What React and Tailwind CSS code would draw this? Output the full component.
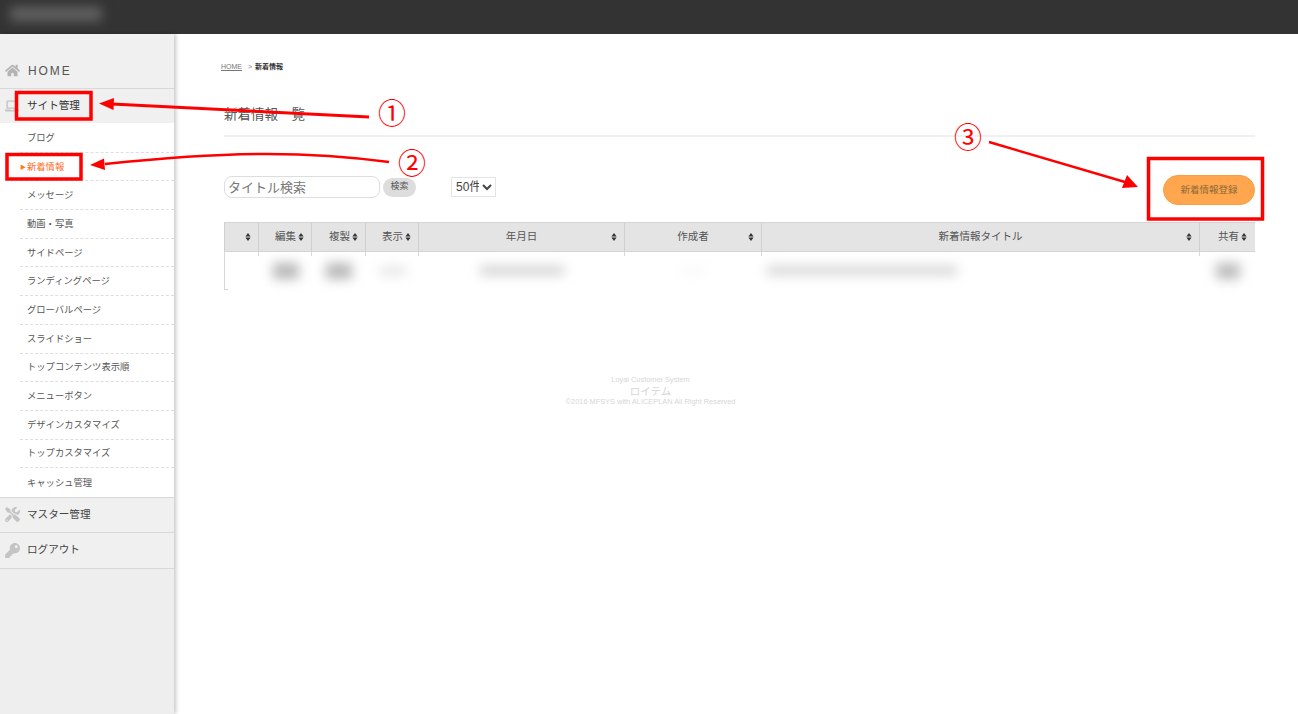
import React from 'react';
import { FaHome, FaLaptop, FaTools, FaKey } from 'react-icons/fa';

const SUB_MENU = ['ブログ', '新着情報', 'メッセージ', '動画・写真', 'サイドページ', 'ランディングページ', 'グローバルページ', 'スライドショー', 'トップコンテンツ表示順', 'メニューボタン', 'デザインカスタマイズ', 'トップカスタマイズ', 'キャッシュ管理'];

const COLUMNS = [
  { label: '', width: 'w-[34px]', center: false },
  { label: '編集', width: 'w-[53px]', center: false, blur: 'w-[26px] h-[16px] bg-[#b8b8b8]' },
  { label: '複製', width: 'w-[54px]', center: false, blur: 'w-[26px] h-[16px] bg-[#b8b8b8]' },
  { label: '表示', width: 'w-[53px]', center: false, blur: 'w-[26px] h-[8px] bg-[#e2e2e2]' },
  { label: '年月日', width: 'w-[206px]', center: true, blur: 'w-[84px] h-[9px] bg-[#d0d0d0]' },
  { label: '作成者', width: 'w-[137px]', center: true, blur: 'w-[24px] h-[3px] bg-[#efefef]' },
  { label: '新着情報タイトル', width: 'w-[438px]', center: true, left: true, blur: 'w-[190px] h-[9px] bg-[#d4d4d4]' },
  { label: '共有', width: 'w-[55px]', center: false, blur: 'w-[24px] h-[16px] bg-[#bcbcbc]' },
];

function SortIcon() {
  return (
    <svg width="6" height="8" viewBox="0 0 6 8" className="shrink-0">
      <path d="M3 0L5.6 3.4H.4zM3 8L.4 4.6h5.2z" fill="#333" />
    </svg>
  );
}

function MainMenu({ icon, label, h }) {
  return (
    <div className={`flex items-center border-b border-[#d9d9d9] bg-[#f0f0f0] text-[10.6px] ${h}`}>
      <div className="flex w-[27px] justify-center pr-[3px] text-[15px] text-[#c4c4c4]">{icon}</div>
      <span className="text-[#444]">{label}</span>
    </div>
  );
}

function Annotations() {
  return (
    <>
      <svg className="pointer-events-none absolute inset-0" width="1298" height="714" viewBox="0 0 1298 714">
        <g fill="none" stroke="#f00">
          <rect x="16.5" y="92.5" width="74.5" height="26.5" strokeWidth="3.5" />
          <rect x="7" y="154.5" width="74" height="24.5" strokeWidth="3.5" />
          <rect x="1148.5" y="158.5" width="114" height="60.5" strokeWidth="3.5" />
          <path d="M369 117L112 104" strokeWidth="3" />
          <path d="M389 162C300 150 220 152 105 164" strokeWidth="2.5" />
          <path d="M989 142L1125 182" strokeWidth="2.5" />
        </g>
        <g fill="#f00">
          <path d="M99 103.500L114 98L113.500 110z" />
          <path d="M90 165L104 158.500L105 170z" />
          <path d="M1138 187L1122 188L1127 175z" />
        </g>
      </svg>
      <span className="absolute left-[378px] top-[98px] text-[28px] leading-[34px] text-[#f00]">①</span>
      <span className="absolute left-[398px] top-[148px] text-[28px] leading-[34px] text-[#f00]">②</span>
      <span className="absolute left-[954px] top-[122px] text-[28px] leading-[34px] text-[#f00]">③</span>
    </>
  );
}

export default function App() {
  return (
    <div className="relative flex h-[714px] w-[1298px] flex-col overflow-hidden bg-white font-['Liberation_Sans','Noto_Sans_CJK_JP',sans-serif]">
      <header className="flex h-[34px] shrink-0 items-center bg-[#333] pl-[10px]">
        <div className="mb-[6px] h-[14px] w-[92px] bg-[#636363] blur-[6px]" />
      </header>

      <div className="flex flex-1">
        <aside className="flex w-[174px] shrink-0 flex-col bg-[#eee] shadow-[2px_0_4px_rgba(0,0,0,0.22)]">
          <div className="flex h-[55px] items-end border-b border-[#d9d9d9] bg-[#f0f0f0] pb-[9px]">
            <div className="flex w-[27px] justify-center pb-[1px] pr-[3px] text-[15px] text-[#b4b4b4]"><FaHome /></div>
            <span className="ml-[1px] text-[12px] leading-[16px] tracking-[0.16em] text-[#555]">HOME</span>
          </div>
          <div className="flex h-[34px] items-center bg-[#f0f0f0] text-[10.6px]">
            <div className="flex w-[27px] justify-center pr-[3px] text-[14px] text-[#c4c4c4]"><FaLaptop /></div>
            <span className="text-[#333]">サイト管理</span>
          </div>
          <nav className="flex flex-col bg-white pt-[1px]">
            {SUB_MENU.map((item, i) => (
              <div key={item} className={`ml-[20px] flex h-[28.7px] items-center pt-[2px] text-[9.3px] ${i < SUB_MENU.length - 1 ? 'border-b border-dashed border-[#dedede]' : ''} ${item === '新着情報' ? 'text-[#ff6a1a]' : 'pl-[7px] text-[#555]'}`}>
                {item === '新着情報' && <span className="mr-[2px] w-[5px] text-[6px] text-[#ff7a1a]">▶</span>}
                {item}
              </div>
            ))}
          </nav>
          <div className="border-t border-[#d9d9d9]">
            <MainMenu icon={<FaTools />} label="マスター管理" h="h-[35px]" />
            <MainMenu icon={<FaKey />} label="ログアウト" h="h-[36px]" />
          </div>
        </aside>

        <main className="flex flex-1 flex-col pl-[50px] pr-[44px] pt-[28px]">
          <div className="flex h-[9px] items-center text-[7px] leading-[9px] text-[#777]">
            <span className="-ml-[3px] underline">HOME</span>
            <span className="ml-[6px]">&gt;</span>
            <span className="ml-[3px] font-bold text-[#333]">新着情報</span>
          </div>

          <h1 className="mt-[32px] h-[32px] text-[13.5px] font-normal leading-[24px] text-[#555]">新着情報一覧</h1>
          <div className="h-[2px] bg-[#f0f0f0]" />

          <div className="flex items-start pt-[18px]">
            <div className="mt-[21px] flex items-center">
              <input
                readOnly
                placeholder="タイトル検索"
                className="h-[22px] w-[156px] rounded-[8px] border border-[#ddd] px-[3px] text-[13px] outline-none placeholder:text-[#777]"
              />
              <button className="ml-[3px] h-[19px] w-[33px] rounded-full bg-[#ddd] text-[9px] text-[#555]">検索</button>
              <select defaultValue="50" className="ml-[35px] h-[20px] w-[45px] border border-[#e4e4e4] bg-white text-[12px] text-[#444]">
                <option value="50">50件</option>
              </select>
            </div>
            <button className="ml-auto mt-[20px] h-[30px] w-[92px] rounded-full border border-[#f59f3f] bg-[#ffa64f] text-[9.5px] text-[#8a6a3a]">新着情報登録</button>
          </div>

          <div className="mt-[17px] border-t border-[#d4d4d4]">
            <div className="flex h-[29px] border-b border-[#d4d4d4] bg-[#e4e4e4]">
              {COLUMNS.map((col, i) => (
                <div key={i} className={`flex items-center justify-end border-l border-[#d0d0d0] pr-[7px] text-[10.5px] text-[#555] ${col.width} ${col.center ? 'relative' : ''}`}>
                  {col.center
                    ? <span className="absolute inset-x-0 text-center">{col.label}</span>
                    : col.label && <span className="mr-[2px]">{col.label}</span>}
                  <SortIcon />
                </div>
              ))}
            </div>
            <div className="flex h-[4px]">
              {COLUMNS.map((col, i) => (
                <div key={i} className={`border-l border-[#d8d8d8] ${col.width}`} />
              ))}
            </div>
            <div className="flex h-[33px] border-l border-[#d8d8d8]">
              {COLUMNS.map((col, i) => (
                <div key={i} className={`flex items-center pb-[4px] ${col.left ? 'justify-start pl-[5px]' : 'justify-center'} ${col.width}`}>
                  {col.blur && <div className={`blur-[6px] ${col.blur}`} />}
                </div>
              ))}
            </div>
            <div className="h-px w-[4px] bg-[#d8d8d8]" />
          </div>

          <footer className="mt-[85px] flex flex-col items-center pr-[178px] text-[#d6d6d6]">
            <span className="text-[7.4px] leading-[10px]">Loyal Customer System</span>
            <span className="text-[10.5px] leading-[12px]">ロイテム</span>
            <span className="text-[7.4px] leading-[10px]">©2016 MFSYS with ALICEPLAN All Right Reserved</span>
          </footer>
        </main>
      </div>

      <Annotations />
    </div>
  );
}
